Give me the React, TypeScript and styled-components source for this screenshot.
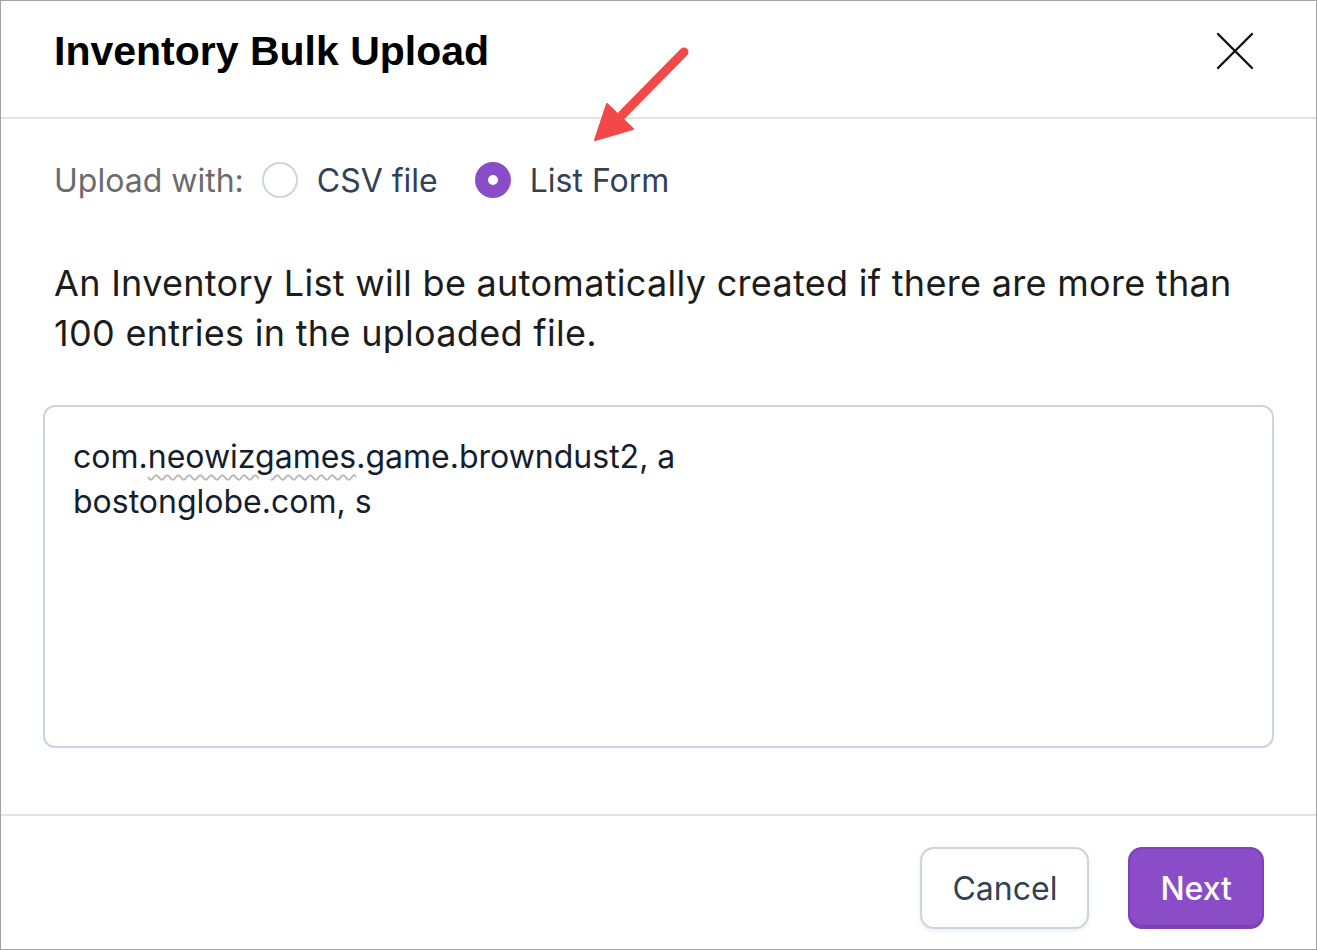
import styled, { createGlobalStyle } from 'styled-components';

const GlobalStyle = createGlobalStyle`
  html, body {
    margin: 0;
    padding: 0;
    background: #ffffff;
  }
  * {
    box-sizing: border-box;
  }
`;

const Frame = styled.div`
  position: relative;
  width: 1317px;
  height: 950px;
  border: 1px solid #a3a3a3;
  background: #ffffff;
  display: flex;
  flex-direction: column;
  font-family: Inter, 'Noto Sans', sans-serif;
  overflow: hidden;
`;

const Header = styled.div`
  height: 118px;
  flex: none;
  display: flex;
  align-items: center;
  justify-content: space-between;
  padding: 0 62px 16px 53px;
  border-bottom: 2px solid #e2e2e2;
`;

const Title = styled.h1`
  margin: 0;
  font-family: 'Liberation Sans', Arial, sans-serif;
  font-weight: 700;
  font-size: 41px;
  color: #000000;
`;

const CloseButton = styled.button`
  border: none;
  background: none;
  padding: 0;
  width: 38px;
  height: 38px;
  display: flex;
  align-items: center;
  justify-content: center;
  cursor: pointer;
`;

const Body = styled.div`
  flex: 1;
  display: flex;
  flex-direction: column;
  padding: 41px 42px 0 42px;
  border-bottom: 2px solid #e2e2e2;
`;

const RadioRow = styled.div`
  display: flex;
  align-items: center;
  height: 40px;
  padding-left: 11px;
  font-size: 32px;
`;

const RowLabel = styled.span`
  color: #6b6b6b;
  margin-right: 18px;
`;

const RadioOption = styled.label`
  display: flex;
  align-items: center;
  gap: 19px;
  margin-right: 37px;
  color: #334155;
  cursor: pointer;
`;

const RadioDot = styled.span<{ $checked?: boolean }>`
  width: 36px;
  height: 36px;
  border-radius: 50%;
  flex: none;
  ${(p) =>
    p.$checked
      ? `background: #ffffff; border: 13px solid #8b4cc8;`
      : `background: #ffffff; border: 2px solid #cbd5e1;`}
`;

const Note = styled.p`
  margin: 58px 0 0 11px;
  font-size: 36px;
  line-height: 50px;
  color: #1c1c1c;
  letter-spacing: 0.3px;
`;

const TextBox = styled.div`
  margin-top: 47px;
  height: 343px;
  border: 2px solid #cbd5e1;
  border-radius: 12px;
  padding: 27px 28px;
  font-size: 32px;
  line-height: 45px;
  color: #161e2e;
`;

const Misspelled = styled.span`
  text-decoration: underline wavy #b8b8b8;
  text-decoration-thickness: 1.5px;
  text-underline-offset: 6px;
`;

const Footer = styled.div`
  height: 133px;
  flex: none;
  display: flex;
  align-items: flex-start;
  justify-content: flex-end;
  gap: 39px;
  padding: 31px 52px 0 0;
`;

const Button = styled.button<{ $primary?: boolean }>`
  height: 82px;
  padding: 0 30px;
  border-radius: 14px;
  font-family: Inter, 'Noto Sans', sans-serif;
  font-size: 32px;
  cursor: pointer;
  ${(p) =>
    p.$primary
      ? `
    background: #8b4cc8;
    border: 2px solid #7e40bb;
    color: #ffffff;
    font-weight: 500;
    box-shadow: inset 0 -2px 0 rgba(0,0,0,0.12);
  `
      : `
    background: #ffffff;
    border: 2px solid #cbd5e1;
    color: #334155;
    box-shadow: 0 2px 4px rgba(15, 23, 42, 0.08);
  `}
`;

const Arrow = styled.svg`
  position: absolute;
  left: 585px;
  top: 38px;
  pointer-events: none;
`;

export default function App() {
  return (
    <>
      <GlobalStyle />
      <Frame>
        <Header>
          <Title>Inventory Bulk Upload</Title>
          <CloseButton aria-label="Close">
            <svg width="38" height="38" viewBox="0 0 38 38">
              <path d="M2 2 L36 36 M36 2 L2 36" stroke="#111" strokeWidth="2.4" strokeLinecap="round" />
            </svg>
          </CloseButton>
        </Header>
        <Body>
          <RadioRow>
            <RowLabel>Upload with:</RowLabel>
            <RadioOption>
              <RadioDot />
              CSV file
            </RadioOption>
            <RadioOption>
              <RadioDot $checked />
              List Form
            </RadioOption>
          </RadioRow>
          <Note>
            An Inventory List will be automatically created if there are more than 100 entries in the
            uploaded file.
          </Note>
          <TextBox>
            com.<Misspelled>neowizgames</Misspelled>.game.browndust2, a
            <br />
            bostonglobe.com, s
          </TextBox>
        </Body>
        <Footer>
          <Button>Cancel</Button>
          <Button $primary>Next</Button>
        </Footer>
        <Arrow width="110" height="110" viewBox="0 0 110 110">
          <path d="M98 13 L36 76" stroke="#f24848" strokeWidth="9" strokeLinecap="round" />
          <path d="M9 101 L21 65 L47 90 Z" fill="#f24848" stroke="#f24848" strokeWidth="2" strokeLinejoin="round" />
        </Arrow>
      </Frame>
    </>
  );
}
